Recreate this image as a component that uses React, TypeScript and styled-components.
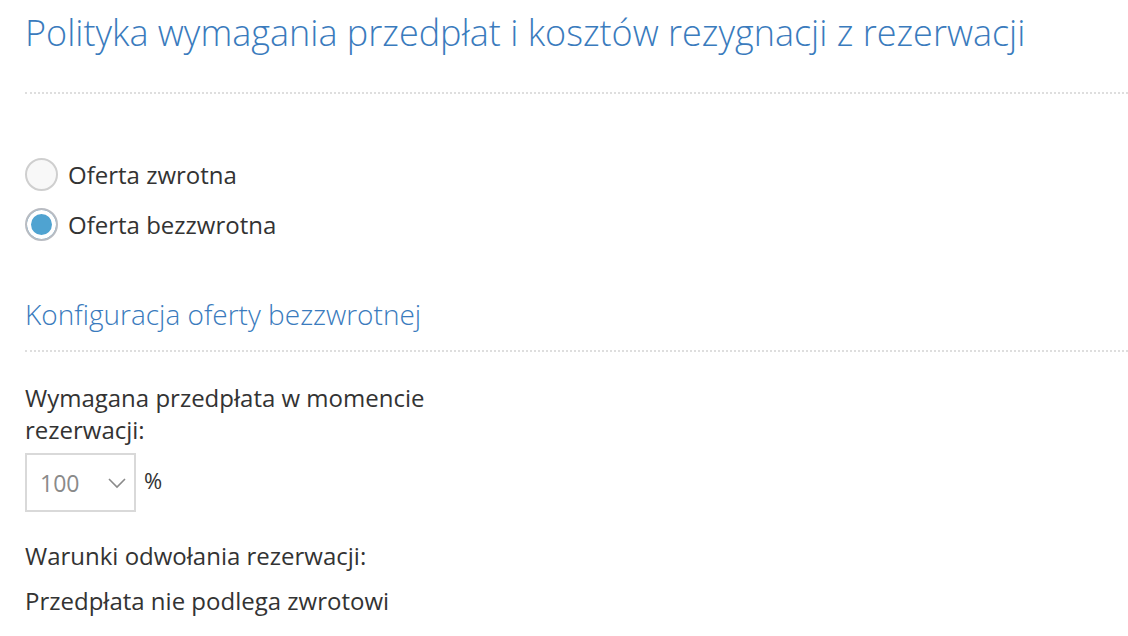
import styled, { createGlobalStyle } from "styled-components";

const GlobalStyle = createGlobalStyle`
    body{
        margin:0;
        background:#ffffff;
        font-family:"Open Sans", "Liberation Sans", sans-serif;
        color:#333333;
    }
`

const Page = styled.div`
    padding:10px 0 0 25px;
    overflow:hidden;
`

const MainHeading = styled.h1`
    margin:0;
    font-size:36px;
    font-weight:300;
    line-height:46px;
    color:#3a7bbd;
    white-space:nowrap;
`

const Divider = styled.hr<{ $gap: number }>`
    margin:${(p) => p.$gap}px 0 0 0;
    border:none;
    border-top:2px dotted #dedede;
    height:0;
`

const RadioGroup = styled.div`
    display:flex;
    flex-direction:column;
    gap:17px;
    margin-top:64px;
`

const RadioRow = styled.label`
    display:flex;
    align-items:center;
    gap:10px;
    font-size:24px;
    line-height:33px;
`

const RadioCircle = styled.span<{ $checked?: boolean }>`
    box-sizing:border-box;
    width:33px;
    height:33px;
    border-radius:50%;
    border:2px solid ${(p) => (p.$checked ? "#b9bcc2" : "#cfcfcf")};
    background:${(p) => (p.$checked ? "#4fa3d1" : "#f8f8f8")};
    box-shadow:${(p) => (p.$checked ? "inset 0 0 0 4px #ffffff" : "none")};
`

const SubHeading = styled.h2`
    margin:53px 0 0 0;
    font-size:28px;
    font-weight:300;
    line-height:40px;
    color:#3a7bbd;
`

const FieldLabel = styled.p`
    margin:30px 0 0 0;
    width:430px;
    font-size:24px;
    line-height:32px;
`

const SelectRow = styled.div`
    display:flex;
    align-items:flex-start;
    gap:8px;
    margin-top:7px;
`

const SelectBox = styled.div`
    box-sizing:border-box;
    width:111px;
    height:59px;
    border:2px solid #d9d9d9;
    display:flex;
    align-items:center;
    justify-content:space-between;
    padding:0 6px 0 13px;
    font-size:23px;
    color:#8a8a8a;
`

const Percent = styled.span`
    font-size:22px;
    line-height:28px;
    margin-top:13px;
`

const InfoText = styled.p<{ $top: number }>`
    margin:${(p) => p.$top}px 0 0 0;
    font-size:24px;
    line-height:32px;
`

export default function App(){
    return(
        <>
            <GlobalStyle />
            <Page>
                <MainHeading>Polityka wymagania przedpłat i kosztów rezygnacji z rezerwacji</MainHeading>
                <Divider $gap={36} />
                <RadioGroup>
                    <RadioRow>
                        <RadioCircle />
                        Oferta zwrotna
                    </RadioRow>
                    <RadioRow>
                        <RadioCircle $checked />
                        Oferta bezzwrotna
                    </RadioRow>
                </RadioGroup>
                <SubHeading>Konfiguracja oferty bezzwrotnej</SubHeading>
                <Divider $gap={16} />
                <FieldLabel>Wymagana przedpłata w momencie rezerwacji:</FieldLabel>
                <SelectRow>
                    <SelectBox>
                        100
                        <svg width="22" height="14" viewBox="0 0 22 14">
                            <path d="M3 3 L11 11 L19 3" fill="none" stroke="#8a8a8a" strokeWidth="1.6" />
                        </svg>
                    </SelectBox>
                    <Percent>%</Percent>
                </SelectRow>
                <InfoText $top={28}>Warunki odwołania rezerwacji:</InfoText>
                <InfoText $top={13}>Przedpłata nie podlega zwrotowi</InfoText>
            </Page>
        </>
    )
}
